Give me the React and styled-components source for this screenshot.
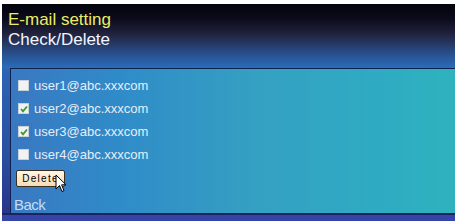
import React from 'react';
import styled, { createGlobalStyle } from 'styled-components';

const Global = createGlobalStyle`
    html, body {
        margin: 0;
        background: #ffffff;
    }
`;

const Frame = styled.div`
    width: 453px;
    height: 217px;
    margin: 4px 0 0 2px;
    display: flex;
    flex-flow: column;
    font-family: 'Liberation Sans', Arial, sans-serif;
`;

const Header = styled.header`
    height: 67px;
    padding: 6px 0 0 6px;
    box-sizing: border-box;
    background: linear-gradient(to bottom, #04040c 0%, #0a0a1a 22%, #222440 48%, #28508e 78%, #2b6cba 100%);

    h1, h2 {
        margin: 0;
        font-weight: normal;
        font-size: 17px;
        line-height: 20px;
    }

    h1 {
        color: #ecec66;
    }

    h2 {
        color: #f4f6ff;
    }
`;

const Body = styled.div`
    flex: 1;
    display: flex;
`;

const SideStrip = styled.div`
    width: 8px;
    background: linear-gradient(to bottom, #2d64b4 0%, #2a4fa0 60%, #28348a 100%);
`;

const Panel = styled.section`
    flex: 1;
    border-top: 1px solid #10204c;
    border-left: 1px solid #10204c;
    padding: 5px 0 0 7px;
    background: linear-gradient(to right, #3a78c2 0%, #2f8cc8 25%, #35a0c2 55%, #2eacc2 85%, #2fb2be 100%);
`;

const Row = styled.label`
    height: 23px;
    display: flex;
    align-items: center;
    gap: 5px;
    color: #e6eef8;
    font-size: 13px;
`;

const Box = styled.span`
    width: 9px;
    height: 9px;
    background: #f2f2f2;
    border: 1px solid #c8d0d8;
    display: flex;
    align-items: center;
    justify-content: center;
    outline: ${p => (p.focused ? '1px dotted #5a6a80' : 'none')};
    outline-offset: 2px;
`;

const ButtonWrap = styled.div`
    position: relative;
    margin: 2px 0 0 -2px;
    width: 50px;
`;

const DeleteButton = styled.button`
    width: 49px;
    height: 17px;
    padding: 0;
    border: 1px solid #3a3020;
    border-radius: 2px;
    background: linear-gradient(to bottom, #fff6e6 0%, #f6dcb8 100%);
    color: #000;
    font-family: 'Liberation Sans', Arial, sans-serif;
    font-size: 10px;
    letter-spacing: 1.3px;
`;

const Cursor = styled.svg`
    position: absolute;
    left: 39px;
    top: 6px;
`;

const BackLink = styled.a`
    display: block;
    margin: 9px 0 0 -4px;
    color: #c4dcf6;
    font-size: 15px;
    letter-spacing: -0.5px;
`;

const Footer = styled.div`
    height: 6px;
    border-top: 2px solid #1a2560;
    background: #3644a8;
`;

const users = [
    { email: 'user1@abc.xxxcom', checked: false },
    { email: 'user2@abc.xxxcom', checked: true },
    { email: 'user3@abc.xxxcom', checked: true, focused: true },
    { email: 'user4@abc.xxxcom', checked: false },
];

const Check = () => (
    <svg width="8" height="8" viewBox="0 0 8 8">
        <path d="M1 4 L3 6.3 L7 1.5" fill="none" stroke="#3a9a30" strokeWidth="1.8" />
    </svg>
);

const App = () => (
    <>
        <Global />
        <Frame>
            <Header>
                <h1>E-mail setting</h1>
                <h2>Check/Delete</h2>
            </Header>
            <Body>
                <SideStrip />
                <Panel>
                    {users.map(u => (
                        <Row key={u.email}>
                            <Box focused={u.focused}>{u.checked && <Check />}</Box>
                            {u.email}
                        </Row>
                    ))}
                    <ButtonWrap>
                        <DeleteButton>Delete</DeleteButton>
                        <Cursor width="12" height="19" viewBox="0 0 12 19">
                            <path d="M1 1 L1 15 L4.5 11.5 L7 17.5 L9 16.6 L6.6 10.8 L11 10.8 Z" fill="#ffffff" stroke="#000000" strokeWidth="1" />
                        </Cursor>
                    </ButtonWrap>
                    <BackLink>Back</BackLink>
                </Panel>
            </Body>
            <Footer />
        </Frame>
    </>
);

export default App;
